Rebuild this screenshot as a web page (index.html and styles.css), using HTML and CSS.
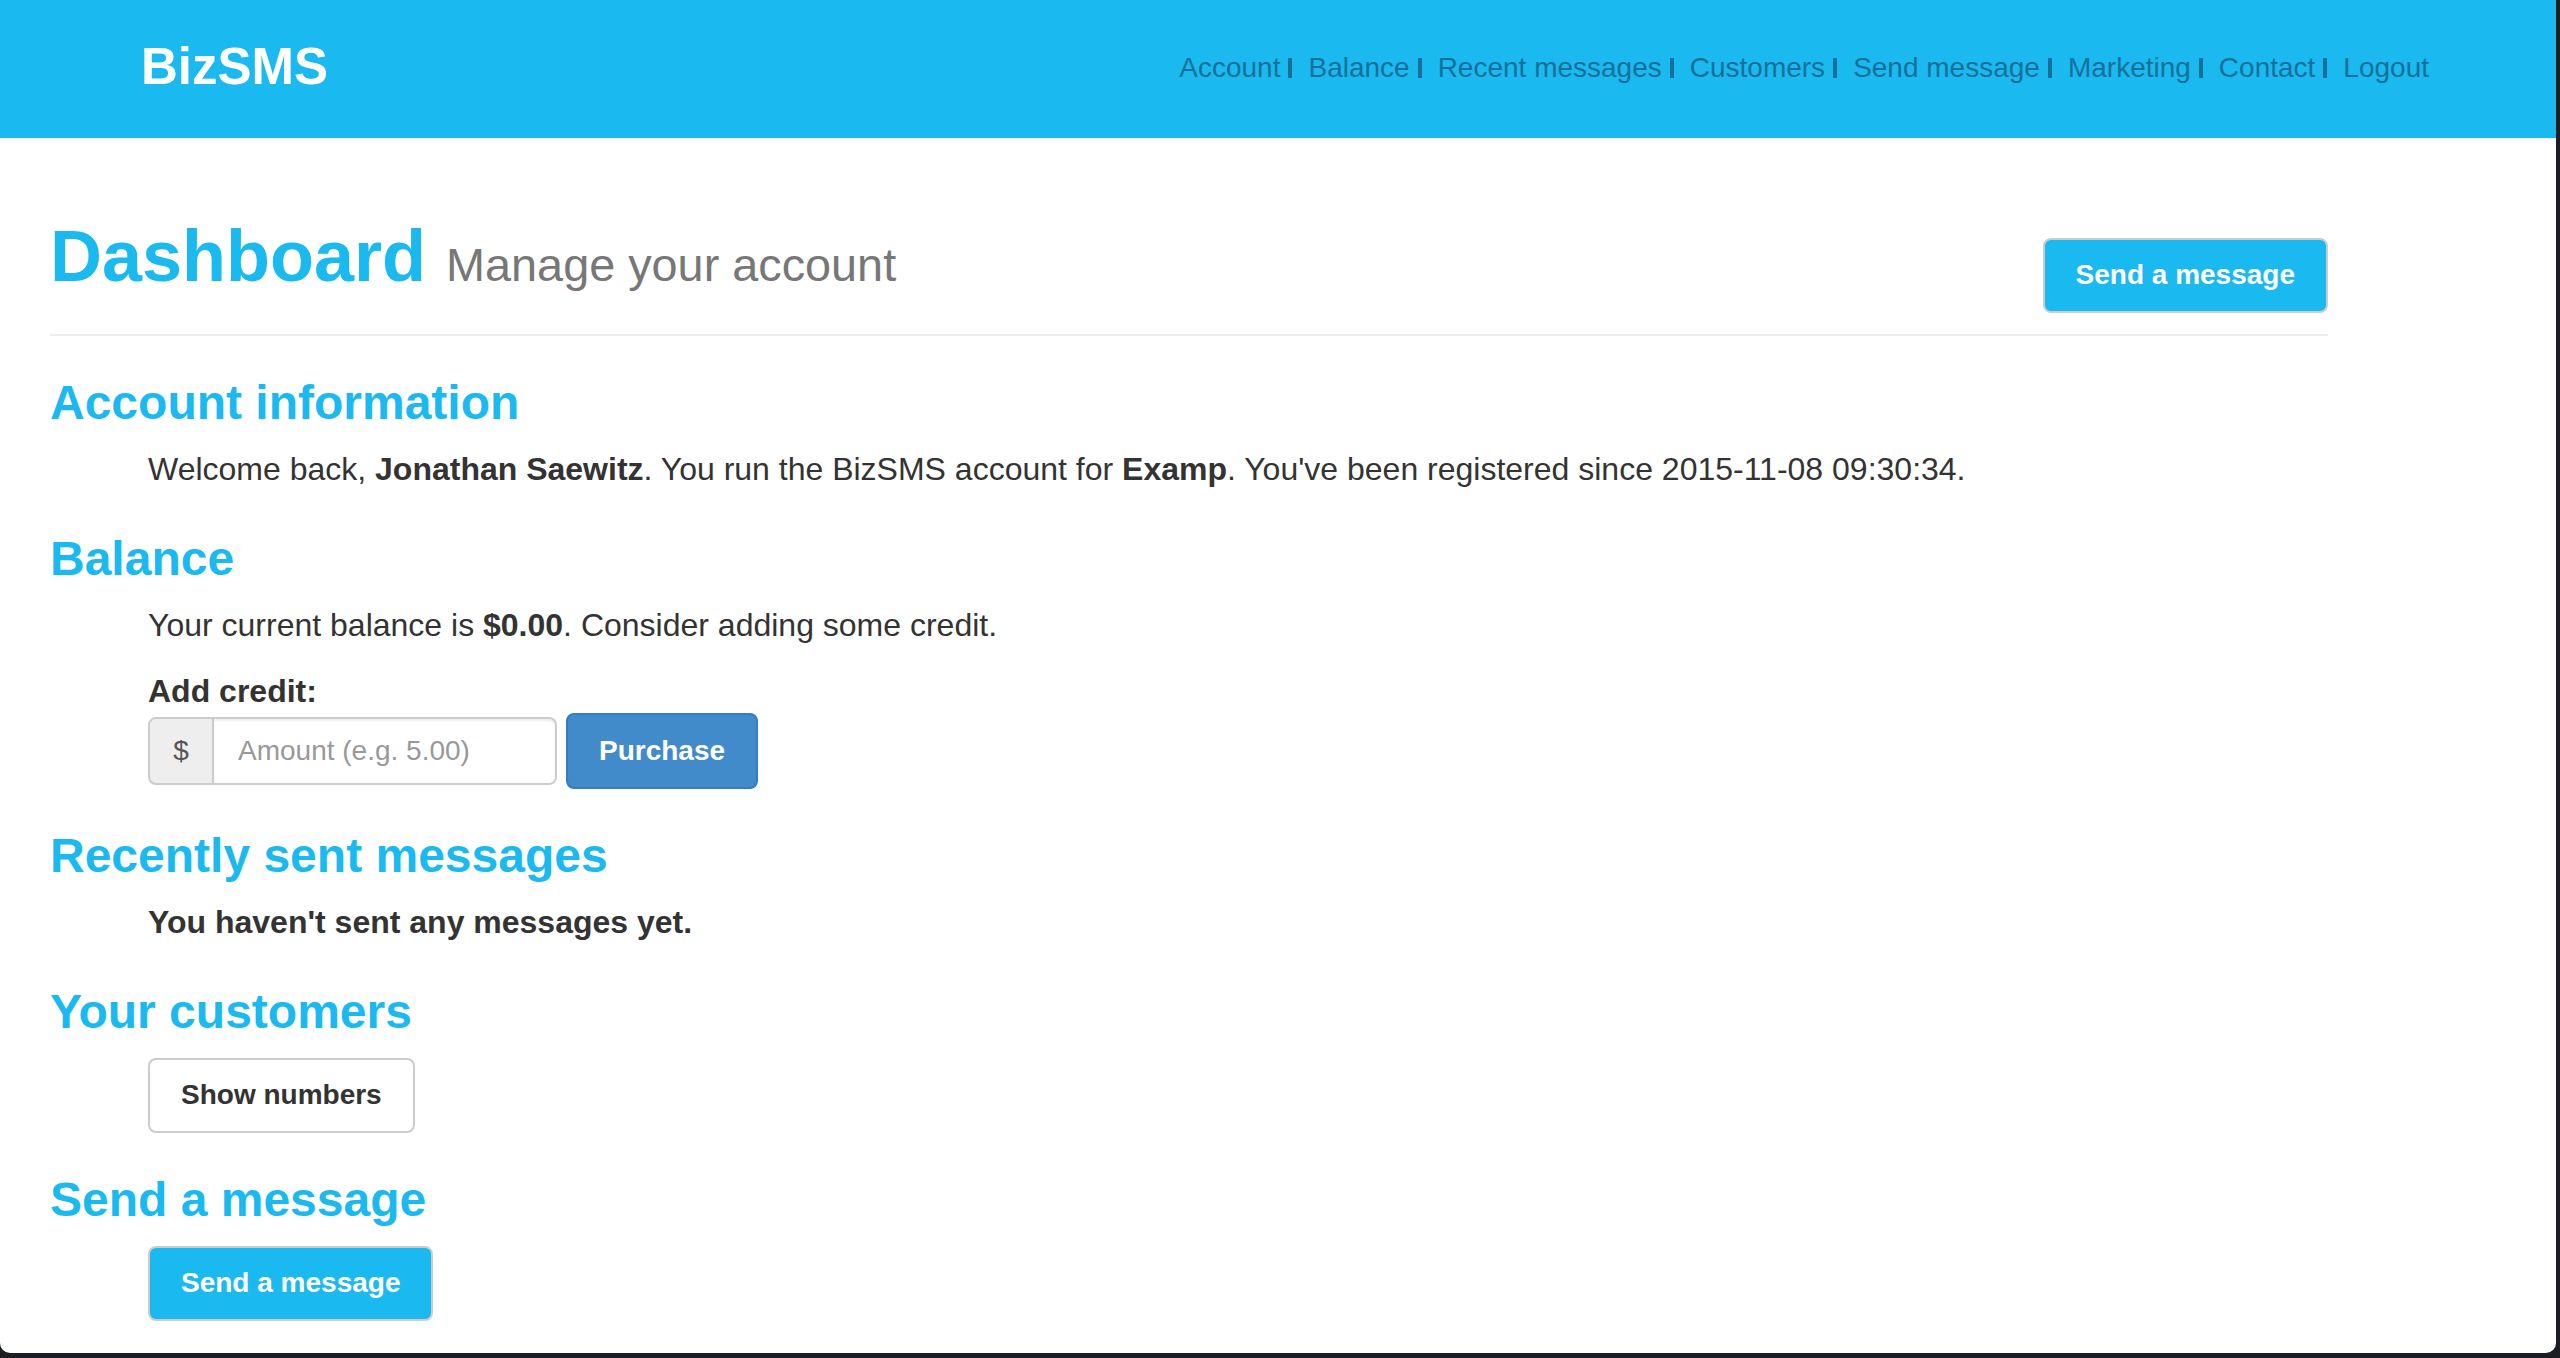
FILE: index.html
```html
<!DOCTYPE html>
<html lang="en">
<head>
    <meta charset="UTF-8">
    <meta name="viewport" content="width=device-width, initial-scale=1.0">
    <title>BizSMS - Dashboard</title>
    <link rel="stylesheet" href="styles.css">
</head>
<body>
    <div class="window">
        <div class="navbar">
            <a class="brand" href="#">BizSMS</a>
            <ul class="nav">
                <li><a href="#">Account</a></li>
                <li><a href="#">Balance</a></li>
                <li><a href="#">Recent messages</a></li>
                <li><a href="#">Customers</a></li>
                <li><a href="#">Send message</a></li>
                <li><a href="#">Marketing</a></li>
                <li><a href="#">Contact</a></li>
                <li><a href="#">Logout</a></li>
            </ul>
        </div>

        <div class="container">
            <div class="page-header">
                <h1>Dashboard <small>Manage your account</small></h1>
                <a class="btn btn-info header-btn" href="#">Send a message</a>
            </div>

            <div class="section">
                <h3>Account information</h3>
                <div class="section-body">
                    <p class="last">Welcome back, <b>Jonathan Saewitz</b>. You run the BizSMS account for <b>Examp</b>. You've been registered since 2015-11-08 09:30:34.</p>
                </div>
            </div>

            <div class="section">
                <h3>Balance</h3>
                <div class="section-body">
                    <p class="balance-text">Your current balance is <b>$0.00</b>. Consider adding some credit.</p>
                    <label class="credit-label" for="amount">Add credit:</label>
                    <div class="credit-form">
                        <div class="input-group">
                            <span class="input-addon">$</span>
                            <input type="text" id="amount" class="amount-input" placeholder="Amount (e.g. 5.00)">
                        </div>
                        <button class="btn btn-primary">Purchase</button>
                    </div>
                </div>
            </div>

            <div class="section">
                <h3>Recently sent messages</h3>
                <div class="section-body">
                    <p class="last"><b>You haven't sent any messages yet.</b></p>
                </div>
            </div>

            <div class="section">
                <h3>Your customers</h3>
                <div class="section-body">
                    <button class="btn btn-default">Show numbers</button>
                </div>
            </div>

            <div class="section">
                <h3>Send a message</h3>
                <div class="section-body">
                    <a class="btn btn-info" href="#">Send a message</a>
                </div>
            </div>
        </div>
    </div>
</body>
</html>
```

FILE: styles.css
```css
body {
    margin: 0;
    font-family: "Liberation Sans", Arial, sans-serif;
    font-size: 32px;
    line-height: 40px;
    color: #333;
    background-color: #1c1e23;
    overflow: hidden;
}

.window {
    width: 2556px;
    height: 1353px;
    background: #fff;
    border-radius: 0 0 10px 10px;
    overflow: hidden;
}

.navbar {
    display: flex;
    justify-content: space-between;
    align-items: flex-start;
    height: 138px;
    padding: 0 127px 0 141px;
    background: #1ab9ef;
}

.brand {
    margin-top: 41px;
    font-size: 51px;
    line-height: 51px;
    font-weight: bold;
    color: #fff;
    text-decoration: none;
}

.nav {
    display: flex;
    margin: 48px 0 0;
    padding: 0;
    list-style: none;
    font-size: 28px;
}

.nav li {
    display: flex;
    align-items: center;
}

.nav li + li::before {
    content: "";
    display: block;
    width: 4px;
    height: 20px;
    margin: 0 16px 0 8px;
    background: #17709a;
}

.nav a {
    color: #17709a;
    text-decoration: none;
}

.container {
    width: 2278px;
    padding-left: 50px;
}

.page-header {
    display: flex;
    justify-content: space-between;
    align-items: flex-start;
    margin-top: 79px;
    padding-bottom: 21px;
    border-bottom: 2px solid #eee;
}

.page-header h1 {
    margin: 0;
    font-size: 72px;
    line-height: 79px;
    color: #1ab9ef;
}

.page-header h1 small {
    font-size: 46.8px;
    font-weight: normal;
    color: #777;
}

.header-btn {
    margin-top: 21px;
}

.section {
    margin-top: 40px;
}

.section h3 {
    margin: 0 0 20px;
    font-size: 48px;
    line-height: 53px;
    color: #1ab9ef;
}

.section-body {
    margin-left: 98px;
}

.section-body p {
    margin: 0;
}

.section-body p.last {
    padding-bottom: 3px;
}

.section-body p.balance-text {
    margin-bottom: 26px;
}

.credit-label {
    display: block;
    margin-bottom: 2px;
    font-weight: bold;
}

.credit-form {
    display: flex;
    align-items: center;
}

.input-group {
    display: flex;
    height: 68px;
}

.input-addon {
    width: 62px;
    display: flex;
    align-items: center;
    justify-content: center;
    font-size: 28px;
    background: #eee;
    color: #555;
    border: 2px solid #ccc;
    border-radius: 8px 0 0 8px;
}

.amount-input {
    width: 343px;
    height: 68px;
    box-sizing: border-box;
    padding: 0 24px;
    font-family: inherit;
    font-size: 28px;
    color: #555;
    border: 2px solid #ccc;
    border-left: none;
    border-radius: 0 8px 8px 0;
    outline: none;
    box-shadow: inset 0 2px 2px rgba(0, 0, 0, 0.075);
}

.amount-input::placeholder {
    color: #999;
}

.btn {
    display: inline-block;
    padding: 15px 31px 16px;
    font-family: inherit;
    font-size: 28px;
    line-height: 40px;
    font-weight: bold;
    text-decoration: none;
    border: 2px solid #ccc;
    border-radius: 8px;
    cursor: pointer;
}

.btn-info {
    color: #fff;
    background: #1ab9ef;
}

.btn-primary {
    margin-left: 9px;
    padding-top: 16px;
    color: #fff;
    background: #428bca;
    border-color: #357ebd;
}

.btn-default {
    color: #333;
    background: #fff;
}
```
